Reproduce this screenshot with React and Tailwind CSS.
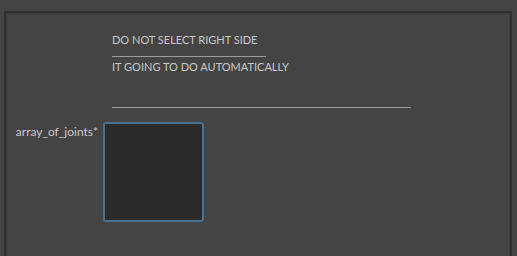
import React from 'react';

const Rule = ({ width }) => (
  <div className="h-px bg-[#b4b4b4] opacity-80" style={{ width }} />
);

const App = () => {
  return (
    <div className="w-[517px] h-[256px] bg-[#444444] overflow-hidden font-['Lato',sans-serif]">
      <div className="ml-[4px] mt-[11px] mr-[5px] h-[260px] border-t-2 border-l-2 border-r-2 border-[#2e2e2e]">
        <div className="h-full border-t border-l border-r border-[#3c3c3c]">
          {/* info rows */}
          <div className="pl-[105px] pt-[17px] text-[11px] text-[#c8c8c8]">
            <div className="h-[25px] leading-[16px] pt-[1px]">DO NOT SELECT RIGHT SIDE</div>
            <Rule width={154} />
            <div className="h-[50px] leading-[16px] pt-[2px]">IT GOING TO DO AUTOMATICALLY</div>
            <Rule width={299} />
          </div>

          {/* joints field */}
          <div className="flex mt-[14px]">
            <div className="w-[91px] pt-[2px] text-right text-[12px] leading-[16px] text-[#c8c8c8]">
              array_of_joints*
            </div>
            <div className="ml-[5px] w-[101px] h-[100px] bg-[#2b2b2b] border-2 border-[#4b7190] rounded-[3px]" />
          </div>
        </div>
      </div>
    </div>
  );
};

export default App;
